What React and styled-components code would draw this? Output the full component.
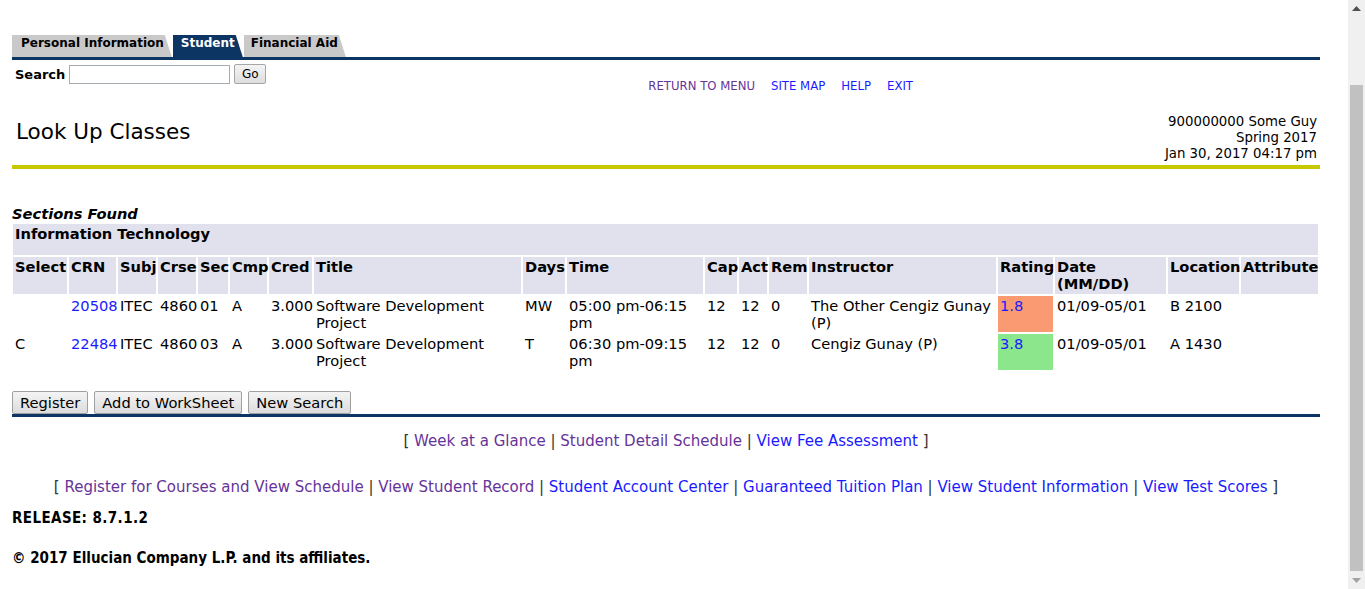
import React from 'react';
import styled, { createGlobalStyle } from 'styled-components';

const NAVY = '#0c3563';
const LAVENDER = '#e1e1ee';
const BODY_FONT = '"DejaVu Sans", Verdana, sans-serif';

const GlobalStyle = createGlobalStyle`
  body {
    margin: 0;
    background: #fff;
    color: #000;
    font-family: ${BODY_FONT};
    font-size: 14.67px;
  }
`;

const Page = styled.div`
  padding: 35px 45px 0 12px;
`;

// browser scrollbar, drawn over the right edge
const ScrollBar = styled.div`
  position: fixed;
  top: 0;
  right: 0;
  bottom: 0;
  width: 17px;
  display: flex;
  flex-direction: column;
  background: #f0f0f0;
`;

const ScrollArrow = styled.div`
  height: 17px;
  display: flex;
  align-items: center;
  justify-content: center;
`;

const ScrollTrack = styled.div`
  flex: 1;
  display: flex;
  padding: 68px 2px 1px;
`;

const ScrollThumb = styled.div`
  flex: 1;
  background: #c1c1c1;
`;

// tabs along the top
const TabBar = styled.div`
  display: flex;
  gap: 1px;
  border-bottom: 3px solid ${NAVY};
`;

const Tab = styled.a`
  display: block;
  height: 22px;
  box-sizing: border-box;
  padding: 1px 8px 0 ${(p) => p.$pl}px;
  font-size: 12px;
  font-weight: bold;
  line-height: 15px;
  text-decoration: none;
  color: ${(p) => (p.$active ? '#fff' : '#000')};
  background: ${(p) => (p.$active ? NAVY : '#c9c9c9')};
  clip-path: polygon(0 0, calc(100% - 7px) 0, 100% 100%, 0 100%);
`;

const SearchRow = styled.div`
  display: flex;
  align-items: flex-start;
  margin-top: 4px;
`;

const SearchForm = styled.form`
  display: flex;
  align-items: center;
  gap: 4px;
  padding-left: 3px;
  height: 20px;
`;

const Label = styled.label`
  font-weight: bold;
  font-size: 13px;
`;

const SearchInput = styled.input`
  width: 161px;
  height: 19px;
  box-sizing: border-box;
  border: 1px solid #a5acb2;
  padding: 0 2px;
`;

const SmallButton = styled.button`
  width: 32px;
  height: 20px;
  padding: 0;
  font-family: ${BODY_FONT};
  font-size: 12px;
  color: #000;
  background: linear-gradient(#f4f4f4, #dddddd);
  border: 1px solid #a6a6a6;
  border-radius: 2px;
`;

const NavLinks = styled.nav`
  display: flex;
  gap: 16px;
  margin: 15px 0 0 382px;
  font-family: "DejaVu Sans Condensed", "DejaVu Sans", sans-serif;
  font-size: 13px;
  line-height: 14px;
`;

const Link = styled.a`
  color: ${(p) => (p.$visited ? '#663399' : '#1a1aff')};
  text-decoration: none;
`;

const TitleBar = styled.div`
  display: flex;
  justify-content: space-between;
  align-items: flex-start;
  margin-top: 20px;
  padding: 0 3px 3px 4px;
  border-bottom: 4px solid #c8c800;
`;

const PageTitle = styled.h1`
  margin: 6px 0 0;
  font-size: 21.5px;
  font-weight: normal;
  line-height: 26px;
`;

const UserInfo = styled.div`
  margin-top: 1px;
  text-align: right;
  font-size: 13.3px;
  line-height: 16px;
`;

const SectionsHeading = styled.div`
  margin-top: 36px;
  font-size: 14.67px;
  line-height: 17px;
  font-weight: bold;
  font-style: italic;
`;

const Results = styled.table`
  width: 1309px;
  margin-left: -1px;
  border-collapse: separate;
  border-spacing: 2px;
  table-layout: fixed;
  font-size: 14.67px;
`;

const Caption = styled.td`
  height: 29px;
  padding: 1px 2px;
  background: ${LAVENDER};
  font-weight: bold;
  line-height: 17px;
  vertical-align: top;
`;

const Th = styled.th`
  height: 35px;
  padding: 1px 2px;
  background: ${LAVENDER};
  font-weight: bold;
  text-align: left;
  vertical-align: top;
  line-height: 17px;
  white-space: ${(p) => (p.$nowrap ? 'nowrap' : 'normal')};
`;

const Td = styled.td`
  height: 34px;
  padding: 1px 2px;
  vertical-align: top;
  line-height: 17px;
  background: ${(p) => p.$bg || 'transparent'};
`;

const ActionBar = styled.div`
  display: flex;
  gap: 6px;
  margin-top: 19px;
  border-bottom: 3px solid ${NAVY};
`;

const Button = styled.button`
  height: 23px;
  padding: 0 7px;
  font-family: ${BODY_FONT};
  font-size: 14.67px;
  color: #000;
  background: linear-gradient(#f4f4f4, #dcdcdc);
  border: 1px solid #a0a0a0;
  border-radius: 2px;
`;

const LinkLine = styled.p`
  margin: ${(p) => p.$mt}px 0 0;
  text-align: center;
  font-size: 15px;
  line-height: 18px;
  color: #333;
`;

const Legal = styled.div`
  margin-top: ${(p) => p.$mt}px;
  font-family: "DejaVu Sans Condensed", "DejaVu Sans", sans-serif;
  font-weight: bold;
  font-size: 15px;
  line-height: 18px;
  letter-spacing: ${(p) => p.$ls || 0}px;
`;

const columns = [
  ['Select', 54], ['CRN', 47], ['Subj', 38], ['Crse', 38], ['Sec', 30], ['Cmp', 37],
  ['Cred', 43], ['Title', 207], ['Days', 42], ['Time', 136], ['Cap', 32], ['Act', 28],
  ['Rem', 38], ['Instructor', 187], ['Rating', 55], ['Date (MM/DD)', 111],
  ['Location', 71], ['Attribute', 77],
];

const sections = [
  {
    select: '', crn: '20508', days: 'MW', time: '05:00 pm-06:15 pm', sec: '01',
    instructor: 'The Other Cengiz Gunay (P)', rating: '1.8', ratingBg: '#fa9a72', loc: 'B 2100',
  },
  {
    select: 'C', crn: '22484', days: 'T', time: '06:30 pm-09:15 pm', sec: '03',
    instructor: 'Cengiz Gunay (P)', rating: '3.8', ratingBg: '#8ce68c', loc: 'A 1430',
  },
];

const footerTop = [
  ['Week at a Glance', true], ['Student Detail Schedule', true], ['View Fee Assessment', false],
];

const footerBottom = [
  ['Register for Courses and View Schedule', true], ['View Student Record', true],
  ['Student Account Center', false], ['Guaranteed Tuition Plan', false],
  ['View Student Information', false], ['View Test Scores', false],
];

const renderLinks = (links) => links.map(([label, visited], i) => (
  <React.Fragment key={label}>
    {i > 0 ? ' | ' : ''}
    <Link href="#" $visited={visited}>{label}</Link>
  </React.Fragment>
));

const App = () => (
  <Page>
    <GlobalStyle />
    <TabBar>
      <Tab href="#" $pl={9}>Personal Information</Tab>
      <Tab href="#" $pl={8} $active>Student</Tab>
      <Tab href="#" $pl={7}>Financial Aid</Tab>
    </TabBar>

    <SearchRow>
      <SearchForm onSubmit={(e) => e.preventDefault()}>
        <Label htmlFor="search">Search</Label>
        <SearchInput id="search" type="text" />
        <SmallButton type="submit">Go</SmallButton>
      </SearchForm>
      <NavLinks>
        <Link href="#" $visited>RETURN TO MENU</Link>
        <Link href="#">SITE MAP</Link>
        <Link href="#">HELP</Link>
        <Link href="#">EXIT</Link>
      </NavLinks>
    </SearchRow>

    <TitleBar>
      <PageTitle>Look Up Classes</PageTitle>
      <UserInfo>
        900000000 Some Guy<br />
        Spring 2017<br />
        Jan 30, 2017 04:17 pm
      </UserInfo>
    </TitleBar>

    <SectionsHeading>Sections Found</SectionsHeading>
    <Results>
      <colgroup>
        {columns.map(([name, w]) => <col key={name} style={{ width: w }} />)}
      </colgroup>
      <tbody>
        <tr>
          <Caption colSpan={columns.length}>Information Technology</Caption>
        </tr>
        <tr>
          {columns.map(([name]) => <Th key={name} $nowrap={name !== 'Date (MM/DD)'}>{name}</Th>)}
        </tr>
        {sections.map((s) => (
          <tr key={s.crn}>
            <Td>{s.select}</Td>
            <Td><Link href="#">{s.crn}</Link></Td>
            <Td>ITEC</Td>
            <Td>4860</Td>
            <Td>{s.sec}</Td>
            <Td>A</Td>
            <Td>3.000</Td>
            <Td>Software Development Project</Td>
            <Td>{s.days}</Td>
            <Td>{s.time}</Td>
            <Td>12</Td>
            <Td>12</Td>
            <Td>0</Td>
            <Td>{s.instructor}</Td>
            <Td $bg={s.ratingBg}><Link href="#">{s.rating}</Link></Td>
            <Td>01/09-05/01</Td>
            <Td>{s.loc}</Td>
            <Td />
          </tr>
        ))}
      </tbody>
    </Results>

    <ActionBar>
      <Button type="button">Register</Button>
      <Button type="button">Add to WorkSheet</Button>
      <Button type="button">New Search</Button>
    </ActionBar>

    <LinkLine $mt={15}>[ {renderLinks(footerTop)} ]</LinkLine>
    <LinkLine $mt={28}>[ {renderLinks(footerBottom)} ]</LinkLine>

    <Legal $mt={13} $ls={0.4}>RELEASE: 8.7.1.2</Legal>
    <Legal $mt={22}>© 2017 Ellucian Company L.P. and its affiliates.</Legal>

    <ScrollBar>
      <ScrollArrow>
        <svg width="9" height="5" viewBox="0 0 9 5"><path d="M0 5 L4.5 0 L9 5 Z" fill="#505050" /></svg>
      </ScrollArrow>
      <ScrollTrack><ScrollThumb /></ScrollTrack>
      <ScrollArrow>
        <svg width="9" height="5" viewBox="0 0 9 5"><path d="M0 0 L9 0 L4.5 5 Z" fill="#a3a3a3" /></svg>
      </ScrollArrow>
    </ScrollBar>
  </Page>
);

export default App;
